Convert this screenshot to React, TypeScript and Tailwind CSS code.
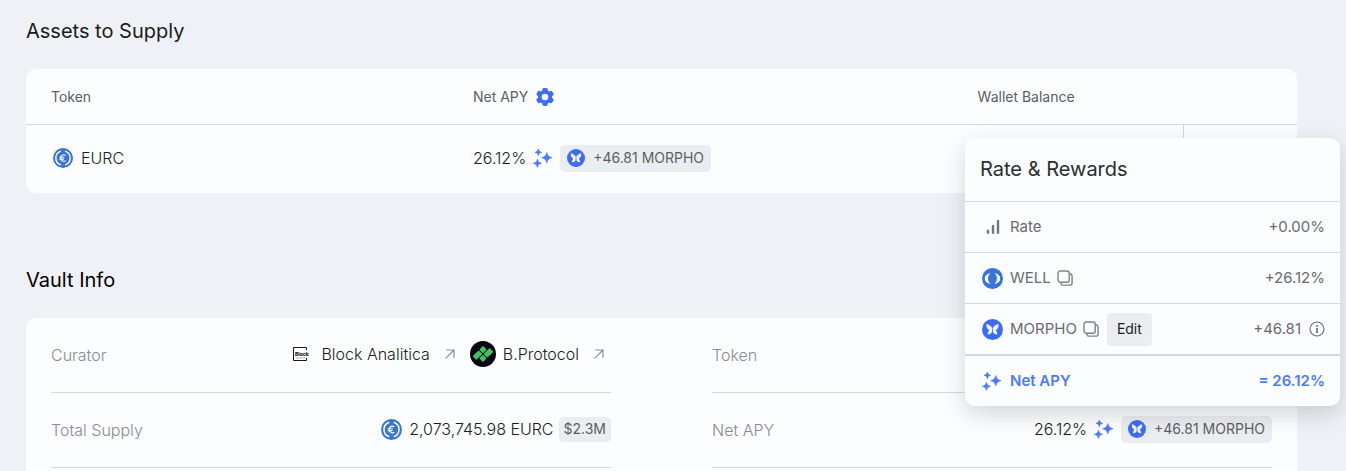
import React from 'react'

interface IconProps {
  className?: string
}

const EurcIcon: React.FC<IconProps> = ({ className = 'h-[21px] w-[21px]' }) => (
  <svg viewBox="0 0 24 24" className={`shrink-0 ${className}`} aria-hidden="true">
    <circle cx="12" cy="12" r="12" fill="#3b74d1" />
    <path d="M9.5 3.7a8.7 8.7 0 0 0 0 16.6M14.5 3.7a8.7 8.7 0 0 1 0 16.6" fill="none" stroke="#fff" strokeWidth="1.7" />
    <path d="M15.2 8.9a3.8 3.8 0 1 0 0 6.2M7.8 11.1h5.8M7.8 13.3h5.2" fill="none" stroke="#fff" strokeWidth="1.3" />
  </svg>
)

const MorphoIcon: React.FC<IconProps> = ({ className = 'h-[21px] w-[21px]' }) => (
  <svg viewBox="0 0 24 24" className={`shrink-0 ${className}`} aria-hidden="true">
    <circle cx="12" cy="12" r="12" fill="#3e6bff" />
    <path
      d="M5.2 5.8c2.8.7 5.2 2.4 6.8 5 1.6-2.600 4-4.300 6.800-5 .5 3.200-.4 5.800-3 6.900l2 4.500c-2.300 1-4.300-.3-5.800-3.300-1.500 3-3.500 4.300-5.800 3.300l2-4.500c-2.600-1.100-3.500-3.700-3-6.900z"
      fill="#f3f6ff"
    />
    <path d="M12 10.800v4" stroke="#3e6bff" strokeWidth="1" />
  </svg>
)

const WellIcon: React.FC<IconProps> = ({ className = 'h-[21px] w-[21px]' }) => (
  <svg viewBox="0 0 24 24" className={`shrink-0 ${className}`} aria-hidden="true">
    <circle cx="12" cy="12" r="12" fill="#3773dc" />
    <path
      d="M9.8 5.9C6 6.2 3.2 8.7 3.2 12s2.800 5.800 6.600 6.100C8 16.600 6.900 14.500 6.900 12s1.100-4.600 2.900-6.100zM14.200 5.900c3.800.3 6.600 2.800 6.600 6.100s-2.800 5.800-6.600 6.100c1.800-1.500 2.900-3.600 2.900-6.100s-1.100-4.600-2.900-6.100z"
      fill="#fff"
    />
  </svg>
)

const SparklesIcon = () => (
  <svg viewBox="0 0 20 20" className="h-5 w-5 shrink-0" fill="#4c7aff" stroke="#4c7aff" strokeWidth=".7" strokeLinejoin="round" aria-hidden="true">
    <path d="M13.800 4.600c.9 3.300 1.800 4.200 5.100 5.100-3.300.9-4.200 1.800-5.100 5.100-.9-3.300-1.800-4.200-5.100-5.100 3.300-.9 4.200-1.800 5.100-5.100z" />
    <path d="M5.300 1c.6 2.100 1.200 2.700 3.300 3.300-2.100.6-2.700 1.200-3.300 3.300C4.700 5.500 4.100 4.900 2 4.300c2.100-.6 2.700-1.200 3.300-3.300z" />
    <path d="M4.400 11.200c.7 2.700 1.400 3.400 4.100 4.100-2.700.7-3.400 1.400-4.100 4.100-.7-2.700-1.400-3.400-4.100-4.100 2.700-.7 3.400-1.400 4.100-4.100z" />
  </svg>
)

const GearIcon = () => (
  <svg viewBox="-9 -9 18 18" className="h-[18px] w-[18px]" fill="#3e6bff" aria-hidden="true">
    {[0, 60, 120].map((angle) => (
      <rect key={angle} x="-2.6" y="-9" width="5.2" height="18" rx="1.4" transform={`rotate(${angle})`} />
    ))}
    <circle r="7.1" />
    <circle r="3.3" fill="#fcfdff" />
  </svg>
)

const BarsIcon = () => (
  <svg viewBox="0 0 14 16" className="h-4 w-3.5" stroke="#73767c" strokeWidth="2.4" strokeLinecap="round" aria-hidden="true">
    <path d="M2 11.8v2M7 7v6.8M12 2v11.8" />
  </svg>
)

const CopyIcon = () => (
  <svg viewBox="0 0 16 16" className="h-4 w-4" fill="none" stroke="#80838a" strokeWidth="1.4" aria-hidden="true">
    <rect x="1" y="1" width="11.2" height="11.2" rx="2.2" />
    <path d="M12.2 3.8h.7a2.2 2.2 0 0 1 2.2 2.2v6.9a2.2 2.2 0 0 1-2.2 2.2H6a2.2 2.2 0 0 1-2.2-2.2v-.7" />
  </svg>
)

const InfoIcon = () => (
  <svg viewBox="0 0 16 16" className="h-4 w-4" fill="none" stroke="#6b6e74" aria-hidden="true">
    <circle cx="8" cy="8" r="7" strokeWidth="1.1" />
    <path d="M8 7v5" strokeWidth="1.7" />
    <path d="M8 4v1.7" strokeWidth="1.7" />
  </svg>
)

const ArrowIcon = () => (
  <svg viewBox="0 0 10 10" className="h-2.5 w-2.5" fill="none" stroke="#8c8e92" strokeWidth="1.2" aria-hidden="true">
    <path d="M1.2 1h7.8v7.8M9 1 .6 9.4" />
  </svg>
)

const BlockAnaliticaIcon = () => (
  <svg viewBox="0 0 26 26" className="h-[26px] w-[26px] shrink-0" aria-hidden="true">
    <circle cx="13" cy="13" r="13" fill="#fff" />
    <path d="M18.5 9V6.5h-13v13h13V17" fill="none" stroke="#17181a" strokeWidth="1" />
    <text x="7" y="15" fontSize="5" fontWeight="800" fill="#17181a" fontFamily="Inter, sans-serif">Block</text>
    <path d="M8 17h9" stroke="#a3a4a6" strokeWidth=".8" />
  </svg>
)

const BProtocolIcon = () => (
  <svg viewBox="0 0 26 26" className="h-[26px] w-[26px] shrink-0" aria-hidden="true">
    <circle cx="13" cy="13" r="13" fill="#080713" />
    {/* each row pairs a long bar with a square tile, mirrored between rows */}
    <g fill="#41c163" transform="translate(13 13) rotate(-45)">
      <rect x="-9" y="-5.8" width="8.6" height="5.4" rx="1" />
      <rect x=".4" y="-5.8" width="5.4" height="5.4" rx="1" />
      <rect x="-5.8" y=".4" width="5.4" height="5.4" rx="1" />
      <rect x=".4" y=".4" width="8.6" height="5.4" rx="1" />
    </g>
  </svg>
)

const ApyValue = () => (
  <div className="flex items-center gap-[7px]">
    <span className="text-base font-light text-[#191d20]">26.12%</span>
    <SparklesIcon />
    <span className="flex h-[27px] items-center gap-2 rounded-[5px] bg-[#ebeef1] px-[7px] text-sm font-normal text-[#5b5e62]">
      <MorphoIcon className="h-[18px] w-[18px]" />
      +46.81 MORPHO
    </span>
  </div>
)

interface InfoRowProps {
  label: string
  children?: React.ReactNode
}

const InfoRow: React.FC<InfoRowProps> = ({ label, children }) => (
  <div className="flex h-[75px] items-center justify-between border-b border-[#d5d8dd] text-base font-light text-[#191d20]">
    <dt className="text-[#898b8f]">{label}</dt>
    <dd className="flex items-center pb-0.5">{children}</dd>
  </div>
)

interface CuratorLinkProps {
  name: string
  icon: React.ReactNode
}

const CuratorLink: React.FC<CuratorLinkProps> = ({ name, icon }) => (
  <a href="#" className="flex items-center">
    {icon}
    <span className="ml-[7px]">{name}</span>
    <span className="ml-[15px]">
      <ArrowIcon />
    </span>
  </a>
)

interface RewardRowProps {
  icon: React.ReactNode
  name: string
  value: string
  copyable?: boolean
  editable?: boolean
}

const RewardRow: React.FC<RewardRowProps> = ({ icon, name, value, copyable, editable }) => (
  <div className="flex h-[51px] items-center border-t border-[#d5d8dd] pr-[15px] pl-[17px] text-[15px] text-[#686b70]">
    <span className="flex w-[21px] justify-center">{icon}</span>
    <span className="ml-[7px]">{name}</span>
    {copyable && (
      <button type="button" aria-label={`Copy ${name} address`} className="ml-1.5">
        <CopyIcon />
      </button>
    )}
    {editable && (
      <button type="button" className="ml-2 h-[33px] rounded bg-[#ebeef1] px-2.5 text-sm text-[#191d20]">
        Edit
      </button>
    )}
    <span className="ml-auto">{value}</span>
    {editable && (
      <button type="button" aria-label="Reward details" className="ml-2">
        <InfoIcon />
      </button>
    )}
  </div>
)

const RewardsPopover = () => (
  <div
    role="dialog"
    aria-label="Rate and rewards"
    className="absolute top-[138px] right-1.5 w-[375px] rounded-[10px] bg-[#fcfdff] shadow-[0_8px_24px_rgba(0,0,0,0.16)]"
  >
    <h3 className="flex h-[63px] items-center px-[15px] pb-0.5 text-xl text-[#2a2d31]">Rate &amp; Rewards</h3>
    <RewardRow icon={<BarsIcon />} name="Rate" value="+0.00%" />
    <RewardRow icon={<WellIcon />} name="WELL" value="+26.12%" copyable />
    <RewardRow icon={<MorphoIcon />} name="MORPHO" value="+46.81" copyable editable />
    <div className="flex h-[52px] items-center border-t-2 border-[#d5d8dd] pr-[15px] pl-[17px] text-[15px] font-semibold text-[#4c7aff]">
      <SparklesIcon />
      <span className="ml-2">Net APY</span>
      <span className="ml-auto">= 26.12%</span>
    </div>
  </div>
)

export default function App() {
  return (
    <main className="relative min-h-screen overflow-hidden bg-[#f0f1f6] pr-[49px] pl-[26px] font-['Inter',sans-serif]">
      <section>
        <h2 className="pt-4 text-xl leading-[30px] text-[#191d20]">Assets to Supply</h2>
        <table className="mt-[23px] w-full table-fixed border-separate border-spacing-0 rounded-[10px] bg-[#fcfdff] text-left">
          <thead>
            <tr className="h-14 text-sm text-[#5b5e62]">
              <th className="w-[33.2%] border-b border-[#d5d8dd] pl-[25px] font-normal">Token</th>
              <th className="w-[39.7%] border-b border-[#d5d8dd] pl-[25px] font-normal">
                <div className="flex items-center gap-2">
                  Net APY
                  <button type="button" aria-label="APY settings">
                    <GearIcon />
                  </button>
                </div>
              </th>
              <th className="w-[18.1%] border-b border-[#d5d8dd] pl-[25px] font-normal">Wallet Balance</th>
              <th className="border-b border-[#d5d8dd]" />
            </tr>
          </thead>
          <tbody>
            <tr className="h-[68px]">
              <td className="pl-[25px]">
                <div className="flex items-center gap-1.5 pb-0.5 text-base font-light text-[#191d20]">
                  <span className="flex h-6 w-6 items-center justify-center rounded-full border border-[#eff1f5] bg-white">
                    <EurcIcon className="h-5 w-5" />
                  </span>
                  EURC
                </div>
              </td>
              <td className="pb-0.5 pl-[25px]">
                <ApyValue />
              </td>
              <td />
              <td className="border-l border-[#d5d8dd]" />
            </tr>
          </tbody>
        </table>
      </section>

      <section>
        <h2 className="mt-[72px] text-xl leading-[30px] text-black">Vault Info</h2>
        <dl className="mt-[23px] grid grid-cols-2 gap-x-[101px] rounded-t-[10px] bg-[#fcfdff] px-[25px] pb-6">
          <InfoRow label="Curator">
            <div className="flex items-center gap-[15px] pr-[7px]">
              <CuratorLink name="Block Analitica" icon={<BlockAnaliticaIcon />} />
              <CuratorLink name="B.Protocol" icon={<BProtocolIcon />} />
            </div>
          </InfoRow>
          <InfoRow label="Token" />
          <InfoRow label="Total Supply">
            <EurcIcon />
            <span className="ml-[7px]">2,073,745.98 EURC</span>
            <span className="ml-[5px] flex h-[25px] items-center rounded bg-[#ebeef1] px-[5px] text-sm font-normal text-[#5b5e62]">
              $2.3M
            </span>
          </InfoRow>
          <InfoRow label="Net APY">
            <ApyValue />
          </InfoRow>
        </dl>
      </section>

      <RewardsPopover />
    </main>
  )
}
